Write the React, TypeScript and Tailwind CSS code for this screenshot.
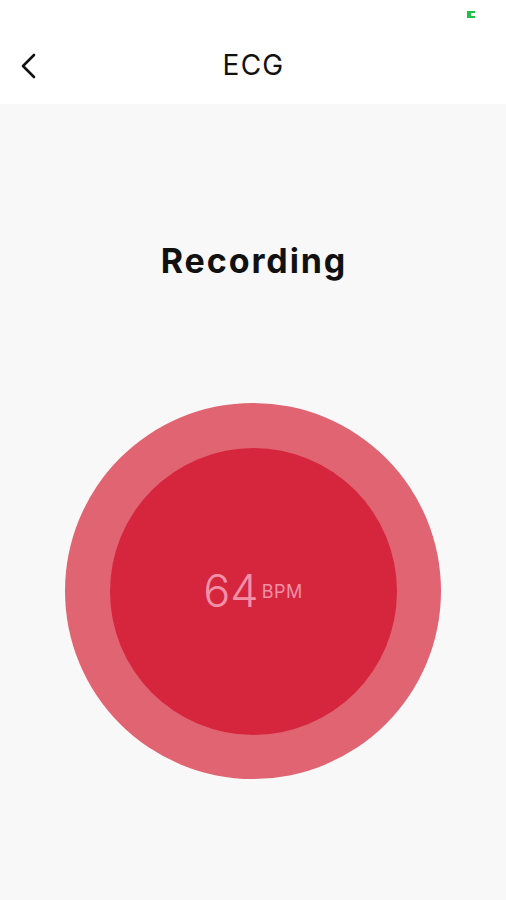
import React from "react";

export default function App() {
  return (
    <div className="w-[506px] h-[900px] bg-[#f8f8f8] flex flex-col" style={{ fontFamily: "Inter, 'Noto Sans', sans-serif" }}>
      <header className="h-[104px] bg-white flex flex-col">
        <div className="h-[28px] flex justify-end items-start pt-[11px] pr-[31px]">
          <svg width="8" height="7" viewBox="0 0 8 7">
            <path d="M0 0 H8 V2 H4 V5 H8 V7 H0 Z" fill="#1ec24a" />
          </svg>
        </div>
        <div className="relative flex-1 flex items-center justify-center">
          <button className="absolute left-[19px] top-1/2 -translate-y-1/2 w-[20px] h-[28px] flex items-center justify-center">
            <svg width="18" height="26" viewBox="0 0 18 26" fill="none">
              <path d="M14 2 L3 13 L14 24" stroke="#111" strokeWidth="2.6" strokeLinecap="round" strokeLinejoin="round" />
            </svg>
          </button>
          <h1 className="text-[28px] leading-none text-[#111] tracking-[1.2px] mt-[-2px] pl-[1px]">ECG</h1>
        </div>
      </header>
      <main className="flex-1 flex flex-col items-center">
        <h2 className="mt-[140px] text-[34px] leading-none font-bold text-[#111] tracking-[1.9px] pl-[2px]">Recording</h2>
        <div className="mt-[125px] w-[376px] h-[376px] rounded-full bg-[#e06472] flex items-center justify-center">
          <div className="w-[287px] h-[287px] rounded-full bg-[#d6263e] flex items-center justify-center">
            <div className="flex items-center text-[#f290a8] mt-[-2px]">
              <span className="text-[45px] leading-none font-light">64</span>
              <span className="text-[18px] leading-none ml-[3px] mt-[4px] tracking-[0.5px]">BPM</span>
            </div>
          </div>
        </div>
      </main>
    </div>
  );
}
